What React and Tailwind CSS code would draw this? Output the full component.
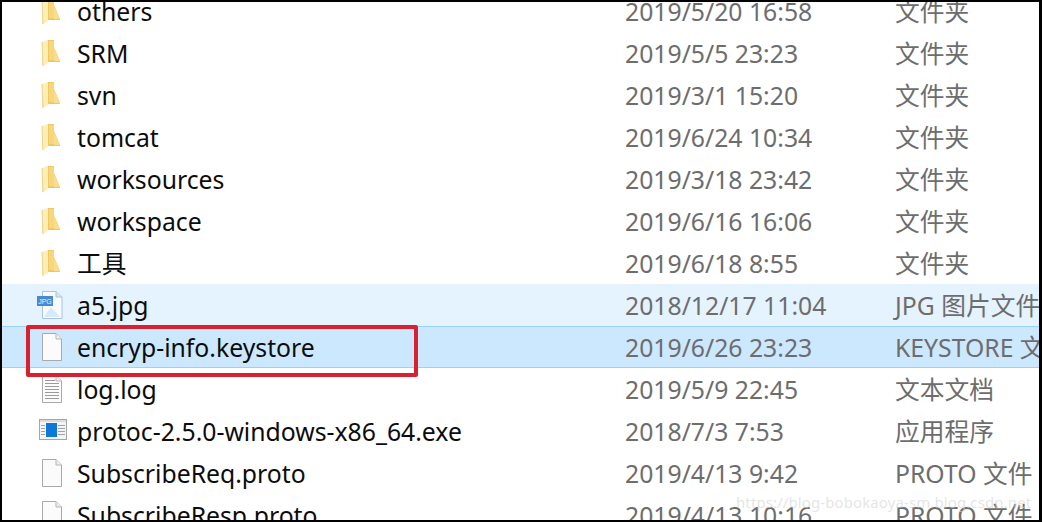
const FONT = "font-['Noto_Sans','Noto_Sans_CJK_SC',sans-serif]";

const Folder = () => (
  <svg width="20" height="28" viewBox="0 0 20 28" className="block mr-[2px]">
    <path d="M6 1 H13 L13 8 L19 22 V23 H6 Z" fill="#f0c862" />
    <path d="M8 2 H13 V21 H8 Z" fill="#f6d77f" />
    <path d="M13 9 L19 22 H13 Z" fill="#f8dd8c" />
    <path d="M1 3 L7 1 V24 L2 27 H1 Z" fill="#fdeeb6" />
    <path d="M1 3 L2 27" stroke="#ecd48a" strokeWidth="1" fill="none" />
  </svg>
);

const Blank = () => (
  <svg width="22" height="30" viewBox="0 0 22 30" className="block">
    <path d="M1.5 1.5 H15 L20.5 7 V28.5 H1.5 Z" fill="#fbfbfb" stroke="#a9a9a9" strokeWidth="1" />
    <path d="M15 1.5 V7 H20.5" fill="#f0f0f0" stroke="#b5b5b5" strokeWidth="1" />
  </svg>
);

const Text = () => (
  <svg width="22" height="30" viewBox="0 0 22 30" className="block">
    <path d="M1.5 1.5 H15 L20.5 7 V28.5 H1.5 Z" fill="#fbfbfb" stroke="#a9a9a9" strokeWidth="1" />
    <path d="M15 1.5 V7 H20.5" fill="#f0f0f0" stroke="#b5b5b5" strokeWidth="1" />
    {[6, 9, 12, 15, 18, 21, 24].map((y) => (
      <path key={y} d={`M4 ${y + 0.5} H${y === 6 ? 14 : 18}`} stroke="#9a9a9a" strokeWidth="1" />
    ))}
  </svg>
);

const Jpg = () => (
  <svg width="27" height="30" viewBox="0 0 27 30" className="block">
    <path d="M6.5 1.5 H20 L26 7 V28.5 H6.5 Z" fill="#f6fbff" stroke="#a8c4dc" strokeWidth="1" />
    <path d="M20 1.5 V7 H26" fill="#d5e6f4" stroke="#a8c4dc" strokeWidth="1" />
    <path d="M8 27 L15 17 L24 27 Z" fill="#d6eafa" />
    <rect x="1" y="6" width="16" height="10" fill="#4a88cf" />
    <text x="9" y="13.5" fontSize="7" fill="#e8f2fb" textAnchor="middle" fontFamily="Liberation Sans, sans-serif">JPG</text>
  </svg>
);

const Exe = () => (
  <svg width="28" height="22" viewBox="0 0 28 22" className="block -mr-[4px] -mt-[2px]">
    <rect x="0.5" y="0.5" width="27" height="20" fill="#f4f4f4" stroke="#a5a5a5" />
    <rect x="1" y="1" width="26" height="2" fill="#dcdcdc" />
    <rect x="7" y="4" width="11" height="14" fill="#0d78d8" />
    {[6, 9, 12, 15].map((y) => (
      <path key={y} d={`M2 ${y + 0.5} H6 M19 ${y + 0.5} H26`} stroke="#9aa3ab" strokeWidth="1" />
    ))}
  </svg>
);

const rows = [
  ["others", "2019/5/20 16:58", "文件夹", Folder],
  ["SRM", "2019/5/5 23:23", "文件夹", Folder],
  ["svn", "2019/3/1 15:20", "文件夹", Folder],
  ["tomcat", "2019/6/24 10:34", "文件夹", Folder],
  ["worksources", "2019/3/18 23:42", "文件夹", Folder],
  ["workspace", "2019/6/16 16:06", "文件夹", Folder],
  ["工具", "2019/6/18 8:55", "文件夹", Folder],
  ["a5.jpg", "2018/12/17 11:04", "JPG 图片文件", Jpg, "hover"],
  ["encryp-info.keystore", "2019/6/26 23:23", "KEYSTORE 文件", Blank, "selected"],
  ["log.log", "2019/5/9 22:45", "文本文档", Text],
  ["protoc-2.5.0-windows-x86_64.exe", "2018/7/3 7:53", "应用程序", Exe],
  ["SubscribeReq.proto", "2019/4/13 9:42", "PROTO 文件", Blank],
  ["SubscribeResp.proto", "2019/4/13 10:16", "PROTO 文件", Blank],
];

const stateClass = {
  hover: "bg-[#e5f3ff]",
  selected: "bg-[#cce8ff] border-y border-[#99d1ff]",
};

function Row({ name, date, type, Icon, state }) {
  return (
    <div className={`flex items-center h-[42px] pl-[29px] text-[24.75px] leading-[42px] whitespace-nowrap ${stateClass[state] || ""}`}>
      <div className="w-[48px] shrink-0 flex justify-end pr-[14px]">
        <Icon />
      </div>
      <div className="w-[548px] shrink-0 pt-[2px] text-[#0c0c0c]">{name}</div>
      <div className="w-[270px] shrink-0 pt-[2px] text-[#6d6d6d]">{date}</div>
      <div className="shrink-0 pt-[2px] text-[#6d6d6d]">{type}</div>
    </div>
  );
}

export default function App() {
  return (
    <div className={`relative w-[1042px] h-[522px] overflow-hidden bg-white border-2 border-black border-r-[3px] ${FONT}`}>
      <div className="-mt-[12px] -ml-[2px]">
        {rows.map(([name, date, type, Icon, state]) => (
          <Row key={name} name={name} date={date} type={type} Icon={Icon} state={state} />
        ))}
      </div>
      <div className="absolute left-[24px] top-[323px] w-[392px] h-[52px] border-4 border-[#d9202e] rounded-[2px]" />
      <div className="absolute left-[734px] top-[491px] text-[15px] leading-[18px] tracking-[0.1px] text-[#d4d4d4]/60 whitespace-nowrap">
        https://blog-bobokaoya-sm.blog.csdn.net
      </div>
    </div>
  );
}
